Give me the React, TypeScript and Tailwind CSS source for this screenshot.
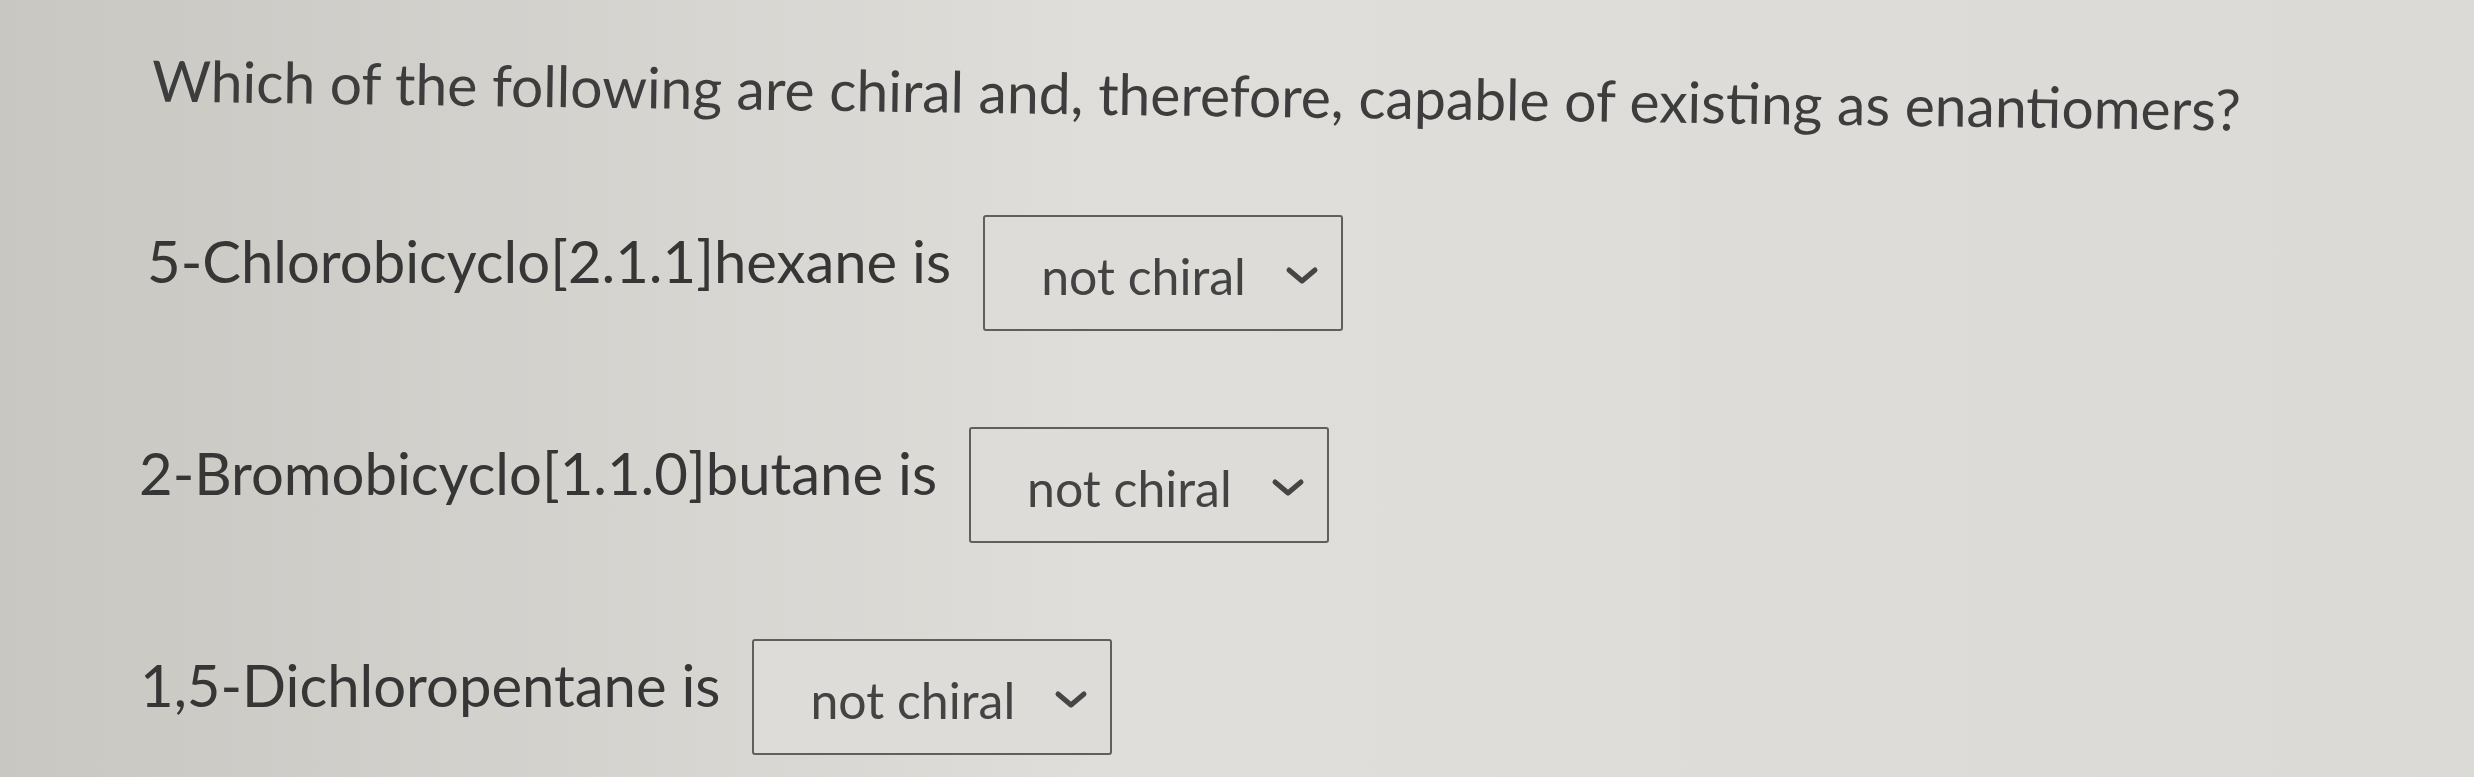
const rows = [
  { label: "5-Chlorobicyclo[2.1.1]hexane is", pad: "pl-[147px]" },
  { label: "2-Bromobicyclo[1.1.0]butane is", pad: "pl-[139px]" },
  { label: "1,5-Dichloropentane is", pad: "pl-[140px]" },
]

function Chevron() {
  return (
    <svg width="34" height="22" viewBox="0 0 34 22" fill="none">
      <path
        d="M4 5L17 16L30 5"
        stroke="#454545"
        strokeWidth="5"
        strokeLinecap="round"
        strokeLinejoin="round"
      />
    </svg>
  )
}

function SelectBox() {
  return (
    <div className="flex h-[116px] w-[360px] items-center justify-between rounded-[3px] border-2 border-[#5f5f5d] bg-[#dddcd8] pl-[56px] pr-[22px] pt-[6px]">
      <span className="text-[50px] leading-[60px] text-[#434343]">not chiral</span>
      <Chevron />
    </div>
  )
}

export default function App() {
  return (
    <div
      className="min-h-screen w-full bg-linear-to-r from-[#c8c7c2] via-[#dfdeda] via-45% to-[#dbdad6] text-[#3c3c3c]"
      style={{ fontFamily: "Lato, 'Noto Sans', sans-serif" }}
    >
      <div className="pt-[60px] pl-[152px]">
        {/* photo is taken at a slight angle */}
        <h1 className="w-fit rotate-[0.8deg] text-[57px] leading-[68px] font-normal text-[#3d3d3d]">
          Which of the following are chiral and, therefore, capable of existing as enantiomers?
        </h1>
      </div>

      <div className="flex flex-col gap-[96px] pt-[87px]">
        {rows.map((row) => (
          <div key={row.label} className={`flex items-center gap-8 ${row.pad}`}>
            <span className="pb-[24px] text-[58px] leading-[70px] text-[#363636]">{row.label}</span>
            <SelectBox />
          </div>
        ))}
      </div>
    </div>
  )
}
